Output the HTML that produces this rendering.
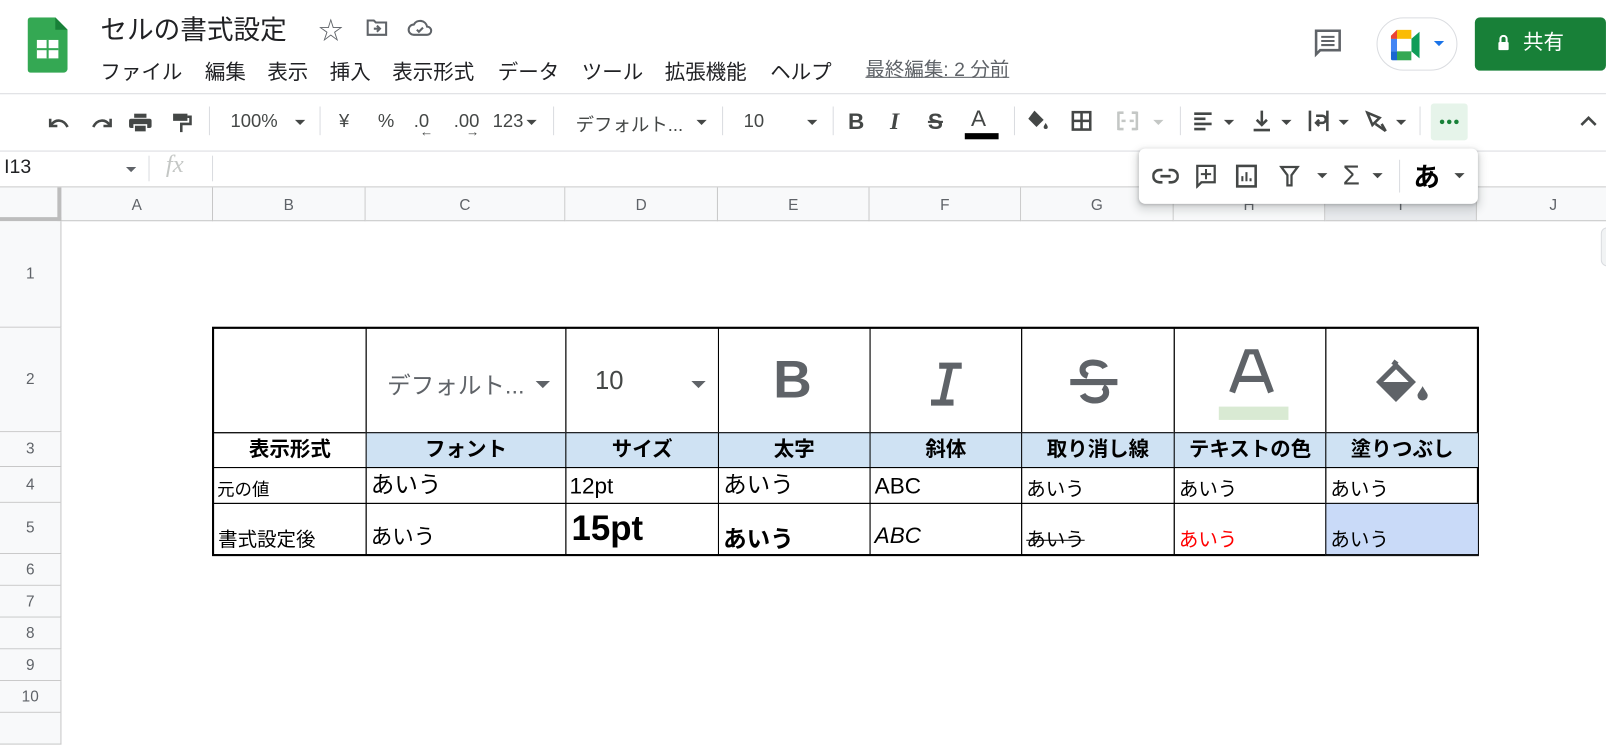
<!DOCTYPE html>
<html><head><meta charset="utf-8">
<style>
*{margin:0;padding:0;box-sizing:border-box}
body{width:1606px;height:709px;overflow:hidden;background:#fff;font-family:"Liberation Sans","Noto Sans CJK JP",sans-serif;position:relative;color:#202124}
#w{position:absolute;left:0;top:0;width:1568px;height:693px;transform:scale(1.0242);transform-origin:0 0}
.a{position:absolute;white-space:nowrap}
.tb{color:#444746;font-size:18px;top:108px}
.dv{position:absolute;top:104px;width:1px;height:28px;background:#dadce0}
.tri{position:absolute;width:0;height:0;border-left:5px solid transparent;border-right:5px solid transparent;border-top:5px solid #444746}
.ch{position:absolute;top:183px;height:33px;background:#f8f9fa;border-right:1px solid #c7c7c7;border-bottom:1px solid #c7c7c7;font-size:15px;color:#5f6368;text-align:center;line-height:35px}
.rh{position:absolute;left:0;width:60px;background:#f8f9fa;border-right:1px solid #c7c7c7;border-bottom:1px solid #c7c7c7;font-size:15px;color:#5f6368;text-align:center}
.c{position:absolute;border:1px solid #000;overflow:hidden;white-space:nowrap;font-family:"Liberation Sans","Noto Sans CJK JP",sans-serif;color:#000}
.h3{background:#cfe2f3;font-weight:bold;font-size:20px;text-align:center;line-height:32px}
.m{position:absolute;top:54px;font-size:20px;color:#202124;white-space:nowrap}
</style></head><body><div id="w">
<svg class="a" style="left:27px;top:17px" width="39" height="54" viewBox="0 0 39 54"><path d="M3 0H27L39 12V50a4 4 0 0 1-4 4H3a3 3 0 0 1-3-3V3a3 3 0 0 1 3-3z" fill="#34a853"/><path d="M27 0V12H39z" fill="#188038"/><rect x="9" y="22" width="21" height="18" fill="#fff"/><rect x="18.5" y="22" width="2" height="18" fill="#34a853"/><rect x="9" y="30" width="21" height="2" fill="#34a853"/></svg>
<div class="a" style="left:98px;top:9px;font-size:26px;color:#202124">セルの書式設定</div>
<div class="a" style="left:311px;top:10px;font-size:24px;color:#5f6368">☆</div>
<svg class="a" style="left:357px;top:18px" width="22" height="18" viewBox="0 0 22 18"><path d="M2 2h6l2 2h10v12H2z" fill="none" stroke="#5f6368" stroke-width="2"/><path d="M8 10h6M11 7l3 3-3 3" fill="none" stroke="#5f6368" stroke-width="2"/></svg>
<svg class="a" style="left:397px;top:17px" width="26" height="20" viewBox="0 0 26 20"><path d="M7 17a5 5 0 0 1 0-10 7 7 0 0 1 13 2 4 4 0 0 1 0 8z" fill="none" stroke="#5f6368" stroke-width="2"/><path d="M10 12l2 2 4-4" fill="none" stroke="#5f6368" stroke-width="2"/></svg>
<div class="m" style="left:98px">ファイル</div>
<div class="m" style="left:200px">編集</div>
<div class="m" style="left:261px">表示</div>
<div class="m" style="left:322px">挿入</div>
<div class="m" style="left:383px">表示形式</div>
<div class="m" style="left:486px">データ</div>
<div class="m" style="left:568px">ツール</div>
<div class="m" style="left:649px">拡張機能</div>
<div class="m" style="left:752px">ヘルプ</div>
<div class="a" style="left:845px;top:53px;font-size:19px;color:#5f6368;text-decoration:underline">最終編集: 2 分前</div>
<svg class="a" style="left:1282px;top:27px" width="30" height="30" viewBox="0 0 30 30"><path d="M3 3h23v19H7l-4 4z" fill="none" stroke="#5f6368" stroke-width="2.5"/><path d="M8 9h13M8 13h13M8 17h13" stroke="#5f6368" stroke-width="2"/></svg>
<div class="a" style="left:1344px;top:17px;width:79px;height:52px;border:1px solid #dadce0;border-radius:26px;background:#fff"></div>
<svg class="a" style="left:1358px;top:29px" width="38" height="30" viewBox="0 0 38 30"><path d="M6 0h14v9H0V6z" fill="#fbbc04"/><path d="M0 6l6-6v9H0z" fill="#ea4335"/><path d="M0 9h6v12H0z" fill="#4285f4"/><path d="M0 21h6v9H2a2 2 0 0 1-2-2z" fill="#1967d2"/><path d="M6 21h14v9H6z" fill="#34a853"/><path d="M20 9l8-7v26l-8-7z" fill="#0f9d58"/><rect x="6" y="9" width="14" height="12" fill="#fff"/></svg>
<div class="tri" style="left:1400px;top:40px;border-top-color:#1a73e8"></div>
<div class="a" style="left:1440px;top:17px;width:128px;height:52px;background:#188038;border-radius:5px;color:#fff;font-size:20px;line-height:50px;padding-left:47px">共有</div>
<svg class="a" style="left:1462px;top:34px" width="12" height="16" viewBox="0 0 12 16"><rect x="1" y="7" width="10" height="8" rx="1" fill="#fff"/><path d="M3 7V4a3 3 0 0 1 6 0v3" fill="none" stroke="#fff" stroke-width="2"/></svg>
<div class="a" style="left:0;top:91px;width:1568px;height:1px;background:#dadce0"></div>
<svg class="a" style="left:45px;top:110px" width="150" height="20" viewBox="0 0 150 20"><path d="M4 6v7h7" fill="none" stroke="#444746" stroke-width="2.5"/><path d="M5 12c4-6 12-6 16 2" fill="none" stroke="#444746" stroke-width="2.5"/><path d="M63 6v7h-7" fill="none" stroke="#444746" stroke-width="2.5"/><path d="M62 12c-4-6-12-6-16 2" fill="none" stroke="#444746" stroke-width="2.5"/><rect x="86" y="1" width="12" height="4" fill="#444746"/><rect x="81" y="6" width="22" height="9" rx="2" fill="#444746"/><rect x="86" y="12" width="12" height="7" fill="#444746" stroke="#fff" stroke-width="1.5"/><rect x="124" y="1" width="14" height="7" fill="#444746"/><path d="M138 4h3v7h-9v8" fill="none" stroke="#444746" stroke-width="2.5"/></svg>
<div class="dv" style="left:204px"></div>
<div class="a tb" style="left:225px">100%</div><div class="tri" style="left:288px;top:117px"></div>
<div class="dv" style="left:312px"></div>
<div class="a tb" style="left:331px">¥</div>
<div class="a tb" style="left:369px">%</div>
<div class="a tb" style="left:404px">.0</div><div class="a" style="left:410px;top:121px;font-size:13px;color:#444746">←</div>
<div class="a tb" style="left:443px">.00</div><div class="a" style="left:455px;top:121px;font-size:13px;color:#444746">→</div>
<div class="a tb" style="left:481px">123</div><div class="tri" style="left:514px;top:117px"></div>
<div class="dv" style="left:540px"></div>
<div class="a tb" style="left:562px">デフォルト...</div><div class="tri" style="left:680px;top:117px"></div>
<div class="dv" style="left:705px"></div>
<div class="a tb" style="left:726px">10</div><div class="tri" style="left:788px;top:117px"></div>
<div class="dv" style="left:813px"></div>
<div class="a" style="left:828px;top:106px;font-size:22px;font-weight:bold;color:#444746">B</div>
<div class="a" style="left:869px;top:106px;font-size:23px;font-weight:bold;font-style:italic;color:#444746;font-family:'Liberation Serif',serif">I</div>
<div class="a" style="left:906px;top:106px;font-size:22px;font-weight:bold;color:#444746;text-decoration:line-through">S</div>
<div class="a" style="left:948px;top:103px;font-size:22px;color:#444746">A</div>
<div class="a" style="left:942px;top:130px;width:33px;height:6px;background:#000"></div>
<div class="dv" style="left:990px"></div>
<svg class="a" style="left:1002px;top:106px" width="22" height="22" viewBox="0 0 22 22"><path d="M8 2l9 9-7 7-8-8z" fill="#444746"/><path d="M19 14c1 2 2 3 2 4a2 2 0 0 1-4 0c0-1 1-2 2-4z" fill="#444746"/></svg>
<svg class="a" style="left:1046px;top:108px" width="20" height="20" viewBox="0 0 20 20"><rect x="1.5" y="1.5" width="17" height="17" fill="none" stroke="#444746" stroke-width="2.5"/><path d="M10 1v18M1 10h18" stroke="#444746" stroke-width="2.5"/></svg>
<svg class="a" style="left:1090px;top:108px" width="22" height="20" viewBox="0 0 22 20"><path d="M2 1v18M20 1v18M2 2h5M2 18h5M15 2h5M15 18h5M5 10h4M13 10h4" stroke="#c4c7c5" stroke-width="2.5"/></svg>
<div class="tri" style="left:1126px;top:117px;border-top-color:#c4c7c5"></div>
<div class="dv" style="left:1152px"></div>
<svg class="a" style="left:1165px;top:108px" width="20" height="20" viewBox="0 0 20 20"><path d="M1 3h17M1 8h11M1 13h17M1 18h11" stroke="#444746" stroke-width="2.5"/></svg><div class="tri" style="left:1195px;top:117px"></div>
<svg class="a" style="left:1222px;top:106px" width="20" height="24" viewBox="0 0 20 24"><path d="M10 2v14M5 11l5 5 5-5M2 21h16" fill="none" stroke="#444746" stroke-width="2.5"/></svg><div class="tri" style="left:1251px;top:117px"></div>
<svg class="a" style="left:1277px;top:107px" width="22" height="22" viewBox="0 0 22 22"><path d="M2 1v20M19 1v20M8 6h6a3 3 0 0 1 0 7H8M11 10l-3 3 3 3" fill="none" stroke="#444746" stroke-width="2.5"/></svg><div class="tri" style="left:1307px;top:117px"></div>
<svg class="a" style="left:1333px;top:107px" width="24" height="22" viewBox="0 0 24 22"><path d="M2 3l12 5-7 7zM10 14l10 7M16 14l4 7" fill="none" stroke="#444746" stroke-width="2.5"/></svg><div class="tri" style="left:1363px;top:117px"></div>
<div class="dv" style="left:1386px"></div>
<div class="a" style="left:1397px;top:101px;width:36px;height:36px;background:#e6f4ea;border-radius:3px"></div>
<svg class="a" style="left:1405px;top:116px" width="20" height="6" viewBox="0 0 20 6"><circle cx="3" cy="3" r="2.2" fill="#188038"/><circle cx="10" cy="3" r="2.2" fill="#188038"/><circle cx="17" cy="3" r="2.2" fill="#188038"/></svg>
<svg class="a" style="left:1542px;top:111px" width="18" height="14" viewBox="0 0 18 14"><path d="M2 11l7-7 7 7" fill="none" stroke="#444746" stroke-width="2.5"/></svg>
<div class="a" style="left:0;top:147px;width:1568px;height:1px;background:#dadce0"></div>
<div class="a" style="left:4px;top:153px;font-size:19px;color:#202124">I13</div><div class="tri" style="left:123px;top:163px;border-top-color:#5f6368"></div>
<div class="a" style="left:145px;top:152px;width:1px;height:25px;background:#dadce0"></div>
<div class="a" style="left:162px;top:148px;font-size:24px;font-style:italic;color:#c4c7c5;font-family:'Liberation Serif',serif">fx</div>
<div class="a" style="left:207px;top:152px;width:1px;height:25px;background:#dadce0"></div>
<div class="a" style="left:0;top:182px;width:1568px;height:1px;background:#c7c7c7"></div>
<div class="ch" style="left:0;width:60px;border-right:4px solid #bdbdbd;border-bottom:4px solid #bdbdbd"></div>
<div class="ch" style="left:60px;width:148px">A</div>
<div class="ch" style="left:208px;width:149px">B</div>
<div class="ch" style="left:357px;width:195px">C</div>
<div class="ch" style="left:552px;width:149px">D</div>
<div class="ch" style="left:701px;width:148px">E</div>
<div class="ch" style="left:849px;width:148px">F</div>
<div class="ch" style="left:997px;width:149px">G</div>
<div class="ch" style="left:1146px;width:148px">H</div>
<div class="ch" style="left:1294px;width:148px;background:#e8eaed">I</div>
<div class="ch" style="left:1442px;width:150px">J</div>
<div class="rh" style="top:216px;height:104px;line-height:104px">1</div>
<div class="rh" style="top:320px;height:102px;line-height:102px">2</div>
<div class="rh" style="top:422px;height:34px;line-height:34px">3</div>
<div class="rh" style="top:456px;height:35px;line-height:35px">4</div>
<div class="rh" style="top:491px;height:50px;line-height:50px">5</div>
<div class="rh" style="top:541px;height:31px;line-height:31px">6</div>
<div class="rh" style="top:572px;height:31px;line-height:31px">7</div>
<div class="rh" style="top:603px;height:31px;line-height:31px">8</div>
<div class="rh" style="top:634px;height:31px;line-height:31px">9</div>
<div class="rh" style="top:665px;height:31px;line-height:31px">10</div>
<div class="rh" style="top:696px;height:31px"></div>
<div class="a" style="left:1563px;top:222px;width:12px;height:38px;background:#f1f3f4;border:1px solid #dadce0;border-radius:6px"></div>
<div class="a" style="left:207px;top:319px;width:1237px;height:224px;border:2px solid #000"></div>
<div class="c" style="left:208px;top:320px;width:150px;height:103px"></div>
<div class="c" style="left:357px;top:320px;width:196px;height:103px"><span class="a" style="left:20px;top:36px;font-size:23px;color:#5f6368">デフォルト...</span><span class="tri" style="left:165px;top:51px;border-left-width:7px;border-right-width:7px;border-top-width:7px;border-top-color:#5f6368"></span></div>
<div class="c" style="left:552px;top:320px;width:150px;height:103px"><span class="a" style="left:28px;top:37px;font-size:25px;color:#444746">10</span><span class="tri" style="left:122px;top:51px;border-left-width:7px;border-right-width:7px;border-top-width:7px;border-top-color:#5f6368"></span></div>
<div class="c" style="left:701px;top:320px;width:149px;height:103px"><span class="a" style="left:53px;top:20px;font-size:52px;font-weight:bold;color:#5f6368">B</span></div>
<div class="c" style="left:849px;top:320px;width:149px;height:103px"><svg class="a" style="left:55px;top:32px" width="40" height="44" viewBox="0 0 40 44"><path d="M12 4h22M4 40h22M23 4L15 40" stroke="#5f6368" stroke-width="6" fill="none"/></svg></div>
<div class="c" style="left:997px;top:320px;width:150px;height:103px"><svg class="a" style="left:45px;top:30px" width="50" height="45" viewBox="0 0 50 45"><path d="M36 8c-2-4-8-5-12-5-6 0-10 3-10 7 0 3 2 5 5 6M14 34c2 4 7 6 12 6 6 0 11-3 11-8 0-2-1-4-3-5" fill="none" stroke="#5f6368" stroke-width="6"/><path d="M2 22h46" stroke="#5f6368" stroke-width="6"/></svg></div>
<div class="c" style="left:1146px;top:320px;width:149px;height:103px"><svg class="a" style="left:50px;top:20px" width="50" height="44" viewBox="0 0 50 44"><path d="M6 42L21 2h8l15 40M12 29h26" fill="none" stroke="#5f6368" stroke-width="6"/></svg><span class="a" style="left:43px;top:76px;width:68px;height:13px;background:#d9ead3"></span></div>
<div class="c" style="left:1294px;top:320px;width:150px;height:103px"><svg class="a" style="left:48px;top:30px" width="56" height="46" viewBox="0 0 56 46"><path d="M17 2l4 3" stroke="#5f6368" stroke-width="5"/><path d="M20 6l16 16-16 16L4 22z" fill="none" stroke="#5f6368" stroke-width="5"/><path d="M4 22h32L20 38z" fill="#5f6368"/><path d="M46 26c2 4 5 7 5 9a5 5 0 0 1-10 0c0-2 3-5 5-9z" fill="#5f6368"/></svg></div>
<div class="c" style="left:208px;top:422px;width:150px;height:35px;font-weight:bold;font-size:20px;text-align:center;line-height:32px">表示形式</div>
<div class="c h3" style="left:357px;top:422px;width:196px;height:35px">フォント</div>
<div class="c h3" style="left:552px;top:422px;width:150px;height:35px">サイズ</div>
<div class="c h3" style="left:701px;top:422px;width:149px;height:35px">太字</div>
<div class="c h3" style="left:849px;top:422px;width:149px;height:35px">斜体</div>
<div class="c h3" style="left:997px;top:422px;width:150px;height:35px">取り消し線</div>
<div class="c h3" style="left:1146px;top:422px;width:149px;height:35px">テキストの色</div>
<div class="c h3" style="left:1294px;top:422px;width:150px;height:35px">塗りつぶし</div>
<div class="c" style="left:208px;top:456px;width:150px;height:36px;font-size:17px;padding:7px 0 0 3px">元の値</div>
<div class="c" style="left:357px;top:456px;width:196px;height:36px;font-size:23px;padding:0 0 0 4px;line-height:32px">あいう</div>
<div class="c" style="left:552px;top:456px;width:150px;height:36px;font-size:22px;padding:0 0 0 3px;line-height:35px">12pt</div>
<div class="c" style="left:701px;top:456px;width:149px;height:36px;font-size:23px;padding:0 0 0 4px;line-height:32px">あいう</div>
<div class="c" style="left:849px;top:456px;width:149px;height:36px;font-size:22px;padding:0 0 0 4px;line-height:35px">ABC</div>
<div class="c" style="left:997px;top:456px;width:150px;height:36px;font-size:19px;padding:6px 0 0 4px">あいう</div>
<div class="c" style="left:1146px;top:456px;width:149px;height:36px;font-size:19px;padding:6px 0 0 4px">あいう</div>
<div class="c" style="left:1294px;top:456px;width:150px;height:36px;font-size:19px;padding:6px 0 0 4px">あいう</div>
<div class="c" style="left:208px;top:491px;width:150px;height:51px;font-size:19px;padding:20px 0 0 4px">書式設定後</div>
<div class="c" style="left:357px;top:491px;width:196px;height:51px;font-size:21px;padding:16px 0 0 4px">あいう</div>
<div class="c" style="left:552px;top:491px;width:150px;height:51px;font-size:34px;font-weight:bold;padding:5px 0 0 5px">15pt</div>
<div class="c" style="left:701px;top:491px;width:149px;height:51px;font-size:23px;font-weight:bold;padding:15px 0 0 4px">あいう</div>
<div class="c" style="left:849px;top:491px;width:149px;height:51px;font-size:22px;font-style:italic;padding:18px 0 0 4px">ABC</div>
<div class="c" style="left:997px;top:491px;width:150px;height:51px;font-size:19px;padding:20px 0 0 4px;text-decoration:line-through">あいう</div>
<div class="c" style="left:1146px;top:491px;width:149px;height:51px;font-size:19px;padding:20px 0 0 4px;color:#ff0000">あいう</div>
<div class="c" style="left:1294px;top:491px;width:150px;height:51px;font-size:19px;padding:20px 0 0 4px;background:#c9daf8">あいう</div>
<div class="a" style="left:1112px;top:145px;width:331px;height:54px;background:#fff;border-radius:6px;box-shadow:0 1px 3px rgba(60,64,67,.3),0 4px 8px 3px rgba(60,64,67,.15)"></div>
<svg class="a" style="left:1125px;top:162px" width="26" height="20" viewBox="0 0 26 20"><path d="M10 4H7a6 6 0 0 0 0 12h3M16 4h3a6 6 0 0 1 0 12h-3M8 10h10" fill="none" stroke="#444746" stroke-width="2.5"/></svg>
<svg class="a" style="left:1167px;top:160px" width="22" height="24" viewBox="0 0 22 24"><path d="M2 2h17v16H6l-4 4z" fill="none" stroke="#444746" stroke-width="2.2"/><path d="M10.5 5v10M5.5 10h10" stroke="#444746" stroke-width="2"/></svg>
<svg class="a" style="left:1206px;top:160px" width="22" height="24" viewBox="0 0 22 24"><rect x="2" y="2" width="18" height="20" fill="none" stroke="#444746" stroke-width="2.5"/><path d="M7 17v-5M11 17v-9M15 17v-3" stroke="#444746" stroke-width="2"/></svg>
<svg class="a" style="left:1249px;top:161px" width="20" height="22" viewBox="0 0 20 22"><path d="M2 2h16l-6 8v10h-4V10z" fill="none" stroke="#444746" stroke-width="2.2"/></svg><div class="tri" style="left:1286px;top:169px"></div>
<div class="a" style="left:1311px;top:156px;font-size:27px;color:#444746">Σ</div><div class="tri" style="left:1340px;top:169px"></div>
<div class="a" style="left:1366px;top:156px;width:1px;height:32px;background:#dadce0"></div>
<div class="a" style="left:1380px;top:153px;font-size:26px;font-weight:bold;color:#000">あ</div><div class="tri" style="left:1420px;top:169px"></div>
</div></body></html>
